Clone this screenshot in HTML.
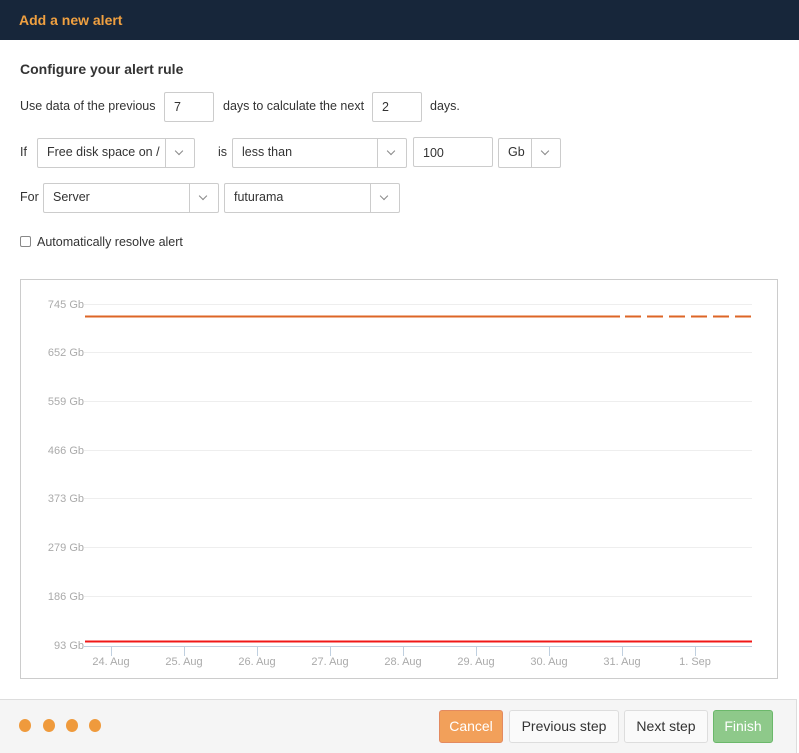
<!DOCTYPE html><html><head><style>
body{margin:0;width:799px;height:753px;overflow:hidden;background:#fff;font-family:"Liberation Sans",sans-serif;font-size:12.5px;color:#333;position:relative}
.hd{position:absolute;left:0;top:0;width:799px;height:40px;background:#17263a;color:#f0a040;font-weight:bold;font-size:14px;line-height:40px;padding-left:19px;box-sizing:border-box}
.t{position:absolute;white-space:nowrap}
.b{position:absolute;border:1px solid #ccc;border-radius:2px;box-sizing:border-box;background:#fff;font-size:12.5px;line-height:27px;padding-left:9px;color:#333}
.sep{position:absolute;top:0;bottom:0;border-left:1px solid #ccc;width:28px;right:0}
.sep:after{content:"";position:absolute;left:10px;top:9px;width:5px;height:5px;border-right:1px solid #888;border-bottom:1px solid #888;transform:rotate(45deg)}
.ft{position:absolute;left:0;top:699px;width:797px;height:54px;background:#f5f5f5;border-top:1px solid #ddd;border-right:1px solid #ddd;box-sizing:border-box}
.dot{position:absolute;top:719px;width:12px;height:13px;border-radius:50%;background:#ef9a3c}
.btn{position:absolute;top:710px;height:33px;border:1px solid #ddd;border-radius:3px;box-sizing:border-box;background:#fafafa;font-size:14px;line-height:31px;text-align:center;color:#333}
</style></head><body>
<div class="hd">Add a new alert</div>
<div class="t" style="left:20px;top:61px;font-size:14px;font-weight:bold">Configure your alert rule</div>
<div class="t" style="left:20px;top:99px">Use data of the previous</div>
<div class="b" style="left:164px;top:92px;width:50px;height:30px;line-height:28px">7</div>
<div class="t" style="left:223px;top:99px">days to calculate the next</div>
<div class="b" style="left:372px;top:92px;width:50px;height:30px;line-height:28px">2</div>
<div class="t" style="left:430px;top:99px">days.</div>
<div class="t" style="left:20px;top:145px">If</div>
<div class="b" style="left:37px;top:138px;width:158px;height:30px">Free disk space on /<div class="sep"></div></div>
<div class="t" style="left:218px;top:145px">is</div>
<div class="b" style="left:232px;top:138px;width:175px;height:30px">less than<div class="sep"></div></div>
<div class="b" style="left:413px;top:137px;width:80px;height:30px;line-height:30px">100</div>
<div class="b" style="left:498px;top:138px;width:63px;height:30px">Gb<div class="sep"></div></div>
<div class="t" style="left:20px;top:190px">For</div>
<div class="b" style="left:43px;top:183px;width:176px;height:30px">Server<div class="sep"></div></div>
<div class="b" style="left:224px;top:183px;width:176px;height:30px">futurama<div class="sep"></div></div>
<div style="position:absolute;left:20px;top:236px;width:11px;height:11px;border:1px solid #888;border-radius:2px;box-sizing:border-box"></div>
<div class="t" style="left:37px;top:235px">Automatically resolve alert</div>
<svg style="position:absolute;left:0;top:0" width="799" height="699" font-family="Liberation Sans" font-size="11" fill="#aaa">
<rect x="20.5" y="279.5" width="757" height="399" fill="none" stroke="#ccc"/>
<g stroke="#eee">
<line x1="84" x2="752" y1="304.5" y2="304.5"/><line x1="84" x2="752" y1="352.5" y2="352.5"/><line x1="84" x2="752" y1="401.5" y2="401.5"/><line x1="84" x2="752" y1="450.5" y2="450.5"/><line x1="84" x2="752" y1="498.5" y2="498.5"/><line x1="84" x2="752" y1="547.5" y2="547.5"/><line x1="84" x2="752" y1="596.5" y2="596.5"/></g>
<g text-anchor="end"><text x="84" y="308">745 Gb</text><text x="84" y="356">652 Gb</text><text x="84" y="405">559 Gb</text><text x="84" y="454">466 Gb</text><text x="84" y="502">373 Gb</text><text x="84" y="551">279 Gb</text><text x="84" y="600">186 Gb</text><text x="84" y="649">93 Gb</text></g>
<line x1="84" x2="752" y1="646.5" y2="646.5" stroke="#c0d0e0"/>
<g stroke="#c0d0e0"><line x1="111.5" x2="111.5" y1="646" y2="656"/><line x1="184.5" x2="184.5" y1="646" y2="656"/><line x1="257.5" x2="257.5" y1="646" y2="656"/><line x1="330.5" x2="330.5" y1="646" y2="656"/><line x1="403.5" x2="403.5" y1="646" y2="656"/><line x1="476.5" x2="476.5" y1="646" y2="656"/><line x1="549.5" x2="549.5" y1="646" y2="656"/><line x1="622.5" x2="622.5" y1="646" y2="656"/><line x1="695.5" x2="695.5" y1="646" y2="656"/></g>
<g text-anchor="middle"><text x="111" y="665">24. Aug</text><text x="184" y="665">25. Aug</text><text x="257" y="665">26. Aug</text><text x="330" y="665">27. Aug</text><text x="403" y="665">28. Aug</text><text x="476" y="665">29. Aug</text><text x="549" y="665">30. Aug</text><text x="622" y="665">31. Aug</text><text x="695" y="665">1. Sep</text></g>
<line x1="85" x2="620" y1="316.5" y2="316.5" stroke="#dd6526" stroke-width="2"/>
<line x1="625" x2="752" y1="316.5" y2="316.5" stroke="#dd6526" stroke-width="2" stroke-dasharray="16,6"/>
<line x1="85" x2="752" y1="641.5" y2="641.5" stroke="#f01818" stroke-width="2"/>
</svg>
<div class="ft"></div>
<div class="dot" style="left:19px"></div><div class="dot" style="left:43px"></div><div class="dot" style="left:66px"></div><div class="dot" style="left:89px"></div>
<div class="btn" style="left:439px;width:64px;background:#f2a05a;border-color:#e38a60;color:#fff">Cancel</div>
<div class="btn" style="left:509px;width:110px">Previous step</div>
<div class="btn" style="left:624px;width:84px">Next step</div>
<div class="btn" style="left:713px;width:60px;background:#8ec98a;border-color:#6bb86a;color:#fff">Finish</div>
</body></html>
